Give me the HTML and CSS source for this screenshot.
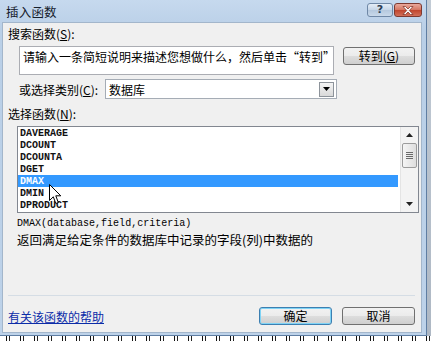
FILE: index.html
```html
<!DOCTYPE html>
<html lang="zh-CN">
<head>
<meta charset="utf-8">
<title>插入函数</title>
<link rel="stylesheet" href="styles.css">
</head>
<body>
<div class="screen">
  <div class="top">
    <div class="dialog">
      <div class="titlebar">
        <span class="title">插入函数</span>
        <div class="caption-btns">
          <span class="cap help">?</span>
          <span class="cap close"><svg width="12" height="9" viewBox="0 0 12 9"><path d="M1 0.5 L3.5 0.5 L6 3 L8.5 0.5 L11 0.5 L7.3 4.5 L11 8.5 L8.5 8.5 L6 6 L3.5 8.5 L1 8.5 L4.7 4.5 Z" fill="#fff" stroke="#7a2b20" stroke-width="0.7"/></svg></span>
        </div>
      </div>
      <div class="client">
        <div class="label">搜索函数(<u>S</u>):</div>
        <div class="search-row">
          <div class="search-box">请输入一条简短说明来描述您想做什么，然后单击“转到”</div>
          <span class="btn go">转到(<u>G</u>)</span>
        </div>
        <div class="cat-row">
          <span class="cat-label">或选择类别(<u>C</u>):</span>
          <div class="combo">
            <span class="combo-text">数据库</span>
            <span class="combo-btn"><svg width="7" height="4" viewBox="0 0 7 4"><path d="M0 0 H7 L3.5 4 Z" fill="#000"/></svg></span>
          </div>
        </div>
        <div class="label label-fn">选择函数(<u>N</u>):</div>
        <div class="listbox">
          <ul class="items">
            <li><span>DAVERAGE</span></li>
            <li><span>DCOUNT</span></li>
            <li><span>DCOUNTA</span></li>
            <li><span>DGET</span></li>
            <li class="sel"><span>DMAX</span></li>
            <li><span>DMIN</span></li>
            <li><span>DPRODUCT</span></li>
          </ul>
          <div class="vscroll">
            <span class="arrow"><svg width="7" height="4" viewBox="0 0 7 4"><path d="M0 4 H7 L3.5 0 Z" fill="#222"/></svg></span>
            <span class="thumb"><i></i><i></i><i></i><i></i></span>
            <span class="track"></span>
            <span class="arrow"><svg width="7" height="4" viewBox="0 0 7 4"><path d="M0 0 H7 L3.5 4 Z" fill="#222"/></svg></span>
          </div>
          <svg class="cursor" width="13" height="21" viewBox="0 0 13 21"><path d="M0.5 0.5 L0.5 16.5 L4.3 12.8 L6.8 19.5 L9.3 18.5 L6.8 11.8 L11.8 11.8 Z" fill="#fff" stroke="#000" stroke-width="1"/></svg>
        </div>
        <div class="sig"><span>DMAX(database,field,criteria)</span></div>
        <div class="desc">返回满足给定条件的数据库中记录的字段(列)中数据的</div>
        <div class="sep"></div>
        <div class="bottom-row">
          <a class="help-link" href="#">有关该函数的帮助</a>
          <div class="btns">
            <span class="btn ok">确定</span>
            <span class="btn">取消</span>
          </div>
        </div>
      </div>
    </div>
    <div class="behind-right"></div>
  </div>
  <div class="behind-bottom"></div>
</div>
</body>
</html>
```
FILE: styles.css
```css
html, body {
  margin: 0;
  padding: 0;
}
body {
  width: 431px;
  height: 341px;
  overflow: hidden;
  font-family: "Noto Sans CJK SC", "Noto Sans", sans-serif;
  font-size: 12px;
  color: #000;
  background: #d2d8df;
}
u { text-decoration: underline; }

.screen {
  width: 431px;
  height: 341px;
  display: flex;
  flex-direction: column;
}
.top {
  display: flex;
  height: 336px;
}
.behind-right {
  flex: 1;
  background: linear-gradient(#c3ccd6, #aeb8c4);
}
.behind-bottom {
  flex: 1;
  background: repeating-linear-gradient(90deg, #fff 0 6px, #111 6px 7px, #fff 7px 9px, #222 9px 10px, #fff 10px 14px);
}

.dialog {
  width: 427px;
  height: 336px;
  box-sizing: border-box;
  display: flex;
  flex-direction: column;
  background: linear-gradient(#c6d9ee, #b9cfe7 30px, #bdd2e9);
  border-right: 1px solid #5f7ea3;
  border-bottom: 1px solid #5f7ea3;
  padding: 0 4px 2px 2px;
}

/* title bar */
.titlebar {
  height: 22px;
  display: flex;
  align-items: center;
  justify-content: space-between;
  padding-left: 4px;
  box-sizing: border-box;
}
.title {
  font-size: 12.5px;
  color: #15202c;
  letter-spacing: 0.2px;
}
.caption-btns {
  display: flex;
  gap: 1px;
  align-self: flex-start;
  margin-top: 3px;
}
.cap {
  height: 14px;
  border-radius: 3px;
  display: flex;
  align-items: center;
  justify-content: center;
  box-sizing: border-box;
}
.help {
  width: 26px;
  border: 1px solid #6f88a6;
  background: linear-gradient(#e4edf7, #c6d6e8 50%, #b4c8de 51%, #c9d9ea);
  color: #2b3d55;
  font-family: "DejaVu Sans", sans-serif;
  font-weight: bold;
  font-size: 11px;
  line-height: 12px;
}
.close {
  width: 28px;
  border: 1px solid #7d3a31;
  background: linear-gradient(#e9a99c, #d47561 50%, #c0452d 51%, #d2705a);
}

/* client area */
.client {
  flex: 1;
  display: flex;
  flex-direction: column;
  background: #f0f0f0;
  border: 1px solid #a3b6cb;
  padding: 0 6px 0 5px;
}
.label {
  line-height: 16px;
  margin-top: 3px;
}
.label-fn {
  margin-top: 7px;
}

.search-row {
  display: flex;
  align-items: flex-start;
  margin-top: 4px;
  padding-left: 11px;
}
.search-box {
  width: 318px;
  height: 29px;
  box-sizing: border-box;
  border: 1px solid #abadb3;
  background: #fff;
  padding: 1px 3px;
  line-height: 17px;
  white-space: nowrap;
  overflow: hidden;
}
.btn {
  width: 73px;
  height: 18px;
  box-sizing: border-box;
  border: 1px solid #707070;
  border-radius: 3px;
  background: linear-gradient(#f2f2f2, #ebebeb 50%, #dddddd 51%, #cfcfcf);
  display: flex;
  align-items: center;
  justify-content: center;
  line-height: 16px;
}
.go {
  margin-left: 9px;
  margin-top: 1px;
}

.cat-row {
  display: flex;
  align-items: center;
  margin-top: 4px;
  padding-left: 11px;
}
.cat-label {
  width: 86px;
}
.combo {
  width: 232px;
  height: 20px;
  box-sizing: border-box;
  border: 1px solid #a5acb5;
  background: #fff;
  display: flex;
  align-items: center;
  justify-content: space-between;
  padding: 0 2px 0 3px;
}
.combo-btn {
  width: 15px;
  height: 15px;
  box-sizing: border-box;
  border: 1px solid #8d939a;
  background: linear-gradient(#f4f4f4, #d9d9d9);
  display: flex;
  align-items: center;
  justify-content: center;
}

.listbox {
  position: relative;
  margin-top: 4px;
  margin-left: 9px;
  width: 402px;
  height: 87px;
  box-sizing: border-box;
  border: 1px solid #828790;
  background: #fff;
  display: flex;
}
.items {
  list-style: none;
  margin: 0 2px 0 0;
  padding: 0;
  flex: 1;
  font-family: "Liberation Mono", monospace;
  font-weight: bold;
  font-size: 11px;
}
.items li {
  height: 12px;
  line-height: 12px;
  padding-left: 2px;
  color: #111;
  white-space: nowrap;
}
.items li span {
  display: inline-block;
  transform: scaleX(0.91);
  transform-origin: left center;
}
.items li.sel {
  background: #3399ff;
  color: #fff;
}
.vscroll {
  width: 17px;
  display: flex;
  flex-direction: column;
  align-items: center;
  background: #f3f3f3;
  border-left: 1px solid #e4e4e4;
}
.arrow {
  height: 16px;
  width: 17px;
  display: flex;
  align-items: center;
  justify-content: center;
}
.thumb {
  width: 15px;
  height: 25px;
  box-sizing: border-box;
  border: 1px solid #9c9c9c;
  border-radius: 2px;
  background: linear-gradient(90deg, #f5f5f5, #dedede);
  display: flex;
  flex-direction: column;
  align-items: center;
  justify-content: center;
  gap: 1px;
}
.thumb i {
  display: block;
  width: 7px;
  height: 1px;
  background: #6a6a6a;
}
.track { flex: 1; }
.cursor {
  position: absolute;
  left: 31px;
  top: 57px;
}

.sig {
  margin-top: 3px;
  margin-left: 9px;
  font-family: "Liberation Mono", monospace;
  font-size: 11px;
  line-height: 15px;
  white-space: nowrap;
}
.sig span {
  display: inline-block;
  transform: scaleX(0.91);
  transform-origin: left center;
}
.desc {
  margin-left: 9px;
  line-height: 17px;
  font-size: 12.5px;
}
.sep {
  margin-top: auto;
  height: 1px;
  background: #d5dde5;
}
.bottom-row {
  display: flex;
  align-items: center;
  justify-content: space-between;
  height: 36px;
  padding-top: 4px;
  box-sizing: border-box;
}
.help-link {
  color: #0b2ca8;
  text-decoration: underline;
}
.btns {
  display: flex;
  gap: 10px;
}
.ok {
  border-color: #3c7fb1;
  box-shadow: inset 0 0 0 1px #7fd3f5;
}
```
